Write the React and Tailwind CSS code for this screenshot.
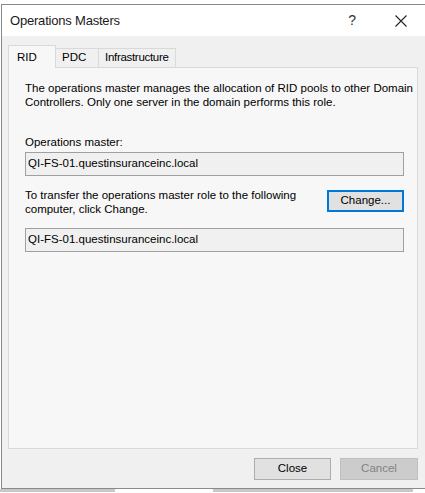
export default function App() {
  const font = { fontFamily: '"Segoe UI", "Liberation Sans", Arial, sans-serif' };
  return (
    <div className="relative h-[493px] w-[425px] overflow-hidden bg-white text-[11.5px] text-black" style={font}>
      <div className="ml-[1px] mt-[4px] flex h-[485px] flex-col border-l border-t border-b border-[#8a8a8a] bg-[#f0f0f0]">
        {/* title bar */}
        <div className="flex h-[31px] items-center bg-white pl-[8px]">
          <span className="text-[13px] tracking-[-0.2px] text-[#1a1a1a]">Operations Masters</span>
          <span className="ml-auto mr-[39px] text-[14px] text-[#333]">?</span>
          <svg width="12" height="12" viewBox="0 0 12 12" className="mr-[18px]">
            <path d="M0.5 0.5 L11.5 11.5 M11.5 0.5 L0.5 11.5" stroke="#222" strokeWidth="1.1" />
          </svg>
        </div>

        <div className="flex flex-1 flex-col pl-[6px] pr-[7px] pt-[8px]">
          {/* tabs */}
          <div className="flex h-[23px] items-end">
            <div className="relative z-10 -mb-px flex h-[23px] w-[48px] items-start border border-b-0 border-[#d9d9d9] bg-[#f7f7f7] pl-[8px] pt-[3px]">RID</div>
            <div className="flex h-[19px] w-[43px] items-center border border-l-0 border-b-0 border-[#d9d9d9] bg-[#f0f0f0] pl-[6px]">PDC</div>
            <div className="flex h-[19px] w-[77px] items-center border border-l-0 border-b-0 border-[#d9d9d9] bg-[#f0f0f0] pl-[6px] tracking-[-0.3px]">Infrastructure</div>
          </div>

          {/* panel */}
          <div className="h-[382px] border border-[#d9d9d9] bg-[#f7f7f7] pl-[16px] pr-[13px] pt-[13px]">
            <p className="-mr-[12px] leading-[14px]">
              The operations master manages the allocation of RID pools to other Domain Controllers. Only one server in the domain performs this role.
            </p>
            <div className="mt-[26px] leading-[14px]">Operations master:</div>
            <div className="mt-[3px] flex h-[24px] items-center border border-[#a0a0a0] bg-[#f0f0f0] pl-[2px]">QI-FS-01.questinsuranceinc.local</div>

            <div className="mt-[12px] flex items-start">
              <p className="w-[275px] leading-[14px]">To transfer the operations master role to the following computer, click Change.</p>
              <button className="ml-auto mt-[2px] h-[22px] w-[77px] border-2 border-[#0078d7] bg-[#e1e1e1] text-[11.5px]">Change...</button>
            </div>
            <div className="mt-[12px] flex h-[24px] items-center border border-[#a0a0a0] bg-[#f0f0f0] pl-[2px]">QI-FS-01.questinsuranceinc.local</div>
          </div>

          {/* buttons */}
          <div className="mt-[9px] flex justify-end gap-[9px]">
            <button className="h-[22px] w-[77px] border border-[#adadad] bg-[#e1e1e1]">Close</button>
            <button className="h-[22px] w-[78px] border border-[#bfbfbf] bg-[#cccccc] text-[#838383]">Cancel</button>
          </div>
        </div>
      </div>
      {/* taskbar peek below the window */}
      <div className="flex h-[3px]">
        <div className="w-[115px] bg-[#c8c8c8]" />
        <div className="w-[98px] bg-white" />
        <div className="w-[200px] bg-[#c8c8c8]" />
      </div>
    </div>
  );
}
